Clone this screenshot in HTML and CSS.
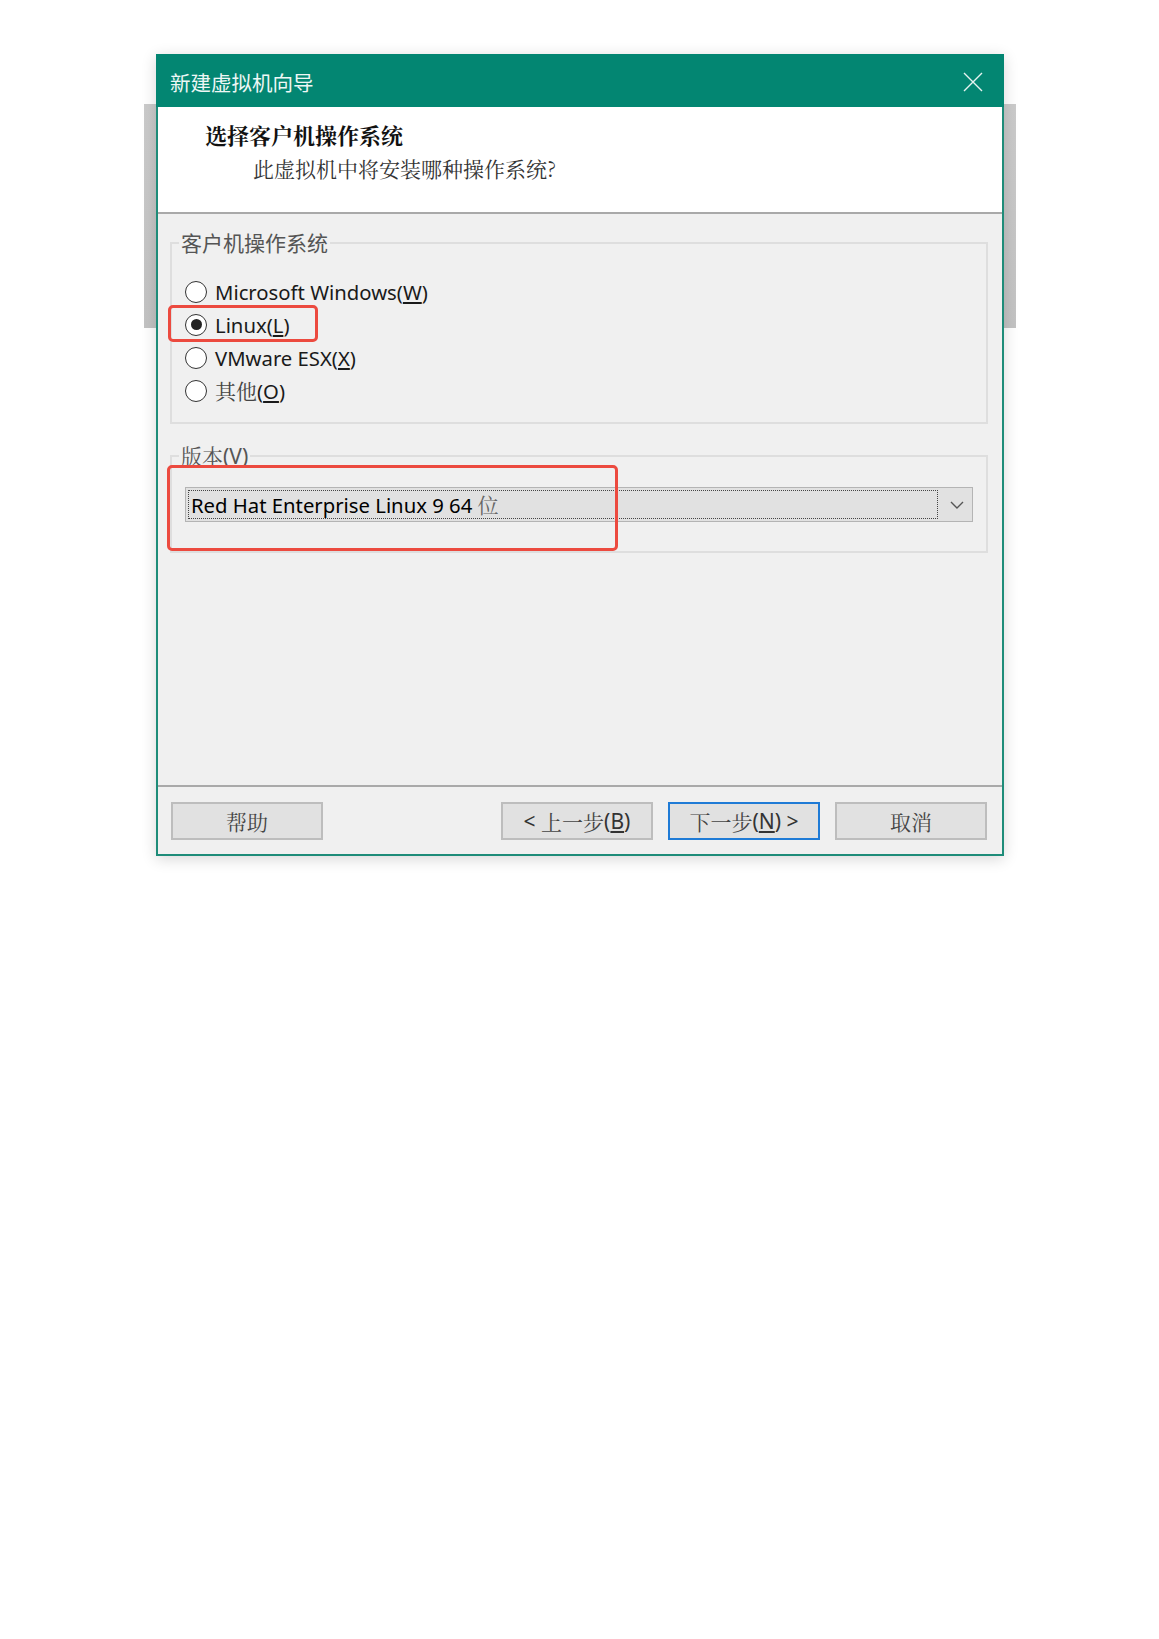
FILE: index.html
```html
<!DOCTYPE html>
<html lang="zh-CN">
<head>
<meta charset="utf-8">
<title>新建虚拟机向导</title>
<link rel="stylesheet" href="styles.css">
</head>
<body>
<div class="desktop">
  <div class="backwin"></div>
  <div class="dialog">
    <div class="titlebar">
      <span class="title">新建虚拟机向导</span>
      <svg class="close" width="20" height="20" viewBox="0 0 20 20"><path d="M1 1L19 19M19 1L1 19" stroke="#e6f3f0" stroke-width="1.4" fill="none"/></svg>
    </div>
    <div class="header">
      <div class="h-title">选择客户机操作系统</div>
      <div class="h-sub">此虚拟机中将安装哪种操作系统?</div>
    </div>
    <div class="content">
      <fieldset class="group os">
        <legend>客户机操作系统</legend>
        <div class="radio"><span class="dot"></span><span class="lbl">Microsoft Windows(<u>W</u>)</span></div>
        <div class="radio checked"><span class="dot"></span><span class="lbl">Linux(<u>L</u>)</span></div>
        <div class="radio"><span class="dot"></span><span class="lbl">VMware ESX(<u>X</u>)</span></div>
        <div class="radio"><span class="dot"></span><span class="lbl"><span class="cjk">其他</span>(<u>O</u>)</span></div>
      </fieldset>
      <fieldset class="group ver">
        <legend><span class="cjk">版本</span>(<u>V</u>)</legend>
        <div class="combo">
          <div class="combo-field">Red Hat Enterprise Linux 9 64 <span class="cjk">位</span></div>
          <div class="combo-arrow"><svg width="14" height="8" viewBox="0 0 14 8"><path d="M1 1L7 7L13 1" stroke="#555" stroke-width="1.4" fill="none"/></svg></div>
        </div>
      </fieldset>
    </div>
    <div class="footer">
      <div class="btn"><span class="cjk">帮助</span></div>
      <div class="btn-group">
        <div class="btn">&lt; <span class="cjk">上一步</span>(<u>B</u>)</div>
        <div class="btn primary"><span class="cjk">下一步</span>(<u>N</u>) &gt;</div>
        <div class="btn"><span class="cjk">取消</span></div>
      </div>
    </div>
    <div class="mark mark1"></div>
    <div class="mark mark2"></div>
  </div>
</div>
</body>
</html>
```
FILE: styles.css
```css
* { box-sizing: border-box; }
html, body { margin: 0; padding: 0; background: #ffffff; }
body {
  font-family: "Noto Sans", "Noto Sans CJK SC", sans-serif;
  width: 1159px;
  height: 1639px;
}
.desktop {
  position: relative;
  padding: 54px 0 0 156px;
}
.backwin {
  position: absolute;
  left: 144px;
  top: 104px;
  width: 872px;
  height: 224px;
  background: linear-gradient(to bottom, #cbcbcb, #c3c3c3);
}
.dialog {
  position: relative;
  width: 848px;
  height: 802px;
  background: #f0f0f0;
  border: 2px solid #1e8c79;
  border-top: 0;
  box-shadow: 0 3px 14px rgba(0, 0, 0, 0.16);
  display: flex;
  flex-direction: column;
}
.titlebar {
  height: 53px;
  flex: none;
  margin: 0 -2px;
  padding: 0 21px 0 14px;
  background: #038672;
  display: flex;
  align-items: center;
  justify-content: space-between;
}
.title {
  color: #eef7f5;
  font-family: "Noto Sans CJK SC", sans-serif;
  font-size: 20.5px;
  line-height: 28px;
  padding-top: 2px;
}
.close { display: block; margin-top: 2px; }
.header {
  height: 107px;
  flex: none;
  background: #ffffff;
  border-bottom: 2px solid #a9a9a9;
  padding: 13px 0 0 47px;
}
.cjk {
  font-family: "Noto Serif CJK SC", "Noto Sans CJK SC", serif;
}
.h-title {
  font-family: "Noto Serif CJK SC", "Noto Sans CJK SC", serif;
  font-weight: bold;
  font-size: 22px;
  line-height: 30px;
  color: #111;
}
.h-sub {
  font-family: "Noto Serif CJK SC", "Noto Sans CJK SC", serif;
  font-size: 21px;
  line-height: 30px;
  color: #333;
  margin-top: 3px;
  padding-left: 48px;
}
.content {
  height: 573px;
  flex: none;
  padding: 15px 14px 0 12px;
  border-bottom: 2px solid #a9a9a9;
}
.group {
  margin: 0;
  border: 2px solid #dedede;
  padding: 18px 13px 15px 13px;
}
.group legend {
  margin-left: -6px;
  padding: 0 2px;
  font-size: 21px;
  line-height: 28px;
  color: #555;
}
.group.ver {
  margin-top: 17px;
  padding-top: 17px;
  padding-bottom: 29px;
}
.radio {
  height: 33px;
  display: flex;
  align-items: center;
  gap: 8px;
}
.dot {
  width: 22px;
  height: 22px;
  border: 1.6px solid #333;
  border-radius: 50%;
  background: #fff;
  display: flex;
  align-items: center;
  justify-content: center;
}
.radio.checked .dot::after {
  content: "";
  width: 11px;
  height: 11px;
  border-radius: 50%;
  background: #222;
}
.lbl {
  font-size: 20.3px;
  line-height: 28px;
  color: #1a1a1a;
}
.lbl .cjk { color: #444; font-size: 21px; }
.combo {
  height: 35px;
  border: 1.5px solid #b4b4b4;
  background: #e1e1e1;
  display: flex;
}
.combo-field {
  flex: 1;
  margin: 2px 0 2px 2px;
  border: 1px dotted #444;
  padding-left: 2px;
  font-size: 20.3px;
  line-height: 27px;
  color: #000;
  white-space: nowrap;
}
.combo-field .cjk { color: #666; font-size: 21px; }
.combo-arrow {
  width: 34px;
  padding-left: 4px;
  display: flex;
  align-items: center;
  justify-content: center;
}
.combo-arrow svg { display: block; }
.footer {
  flex: 1;
  padding: 15px 15px 0 13px;
  display: flex;
  justify-content: space-between;
  align-items: flex-start;
}
.btn-group { display: flex; gap: 15px; }
.btn {
  width: 152px;
  height: 38px;
  border: 2px solid #bdbdbd;
  background: #e1e1e1;
  display: flex;
  align-items: center;
  justify-content: center;
  font-size: 21px;
  color: #333;
  white-space: pre;
}
.btn .cjk { color: #444; }
.btn.primary { border-color: #1f7bd6; }
.mark {
  position: absolute;
  border: 3px solid #ec4a3f;
  border-radius: 5px;
}
.mark1 { left: 10px; top: 251px; width: 150px; height: 37px; }
.mark2 { left: 9px; top: 411px; width: 451px; height: 86px; }
```
